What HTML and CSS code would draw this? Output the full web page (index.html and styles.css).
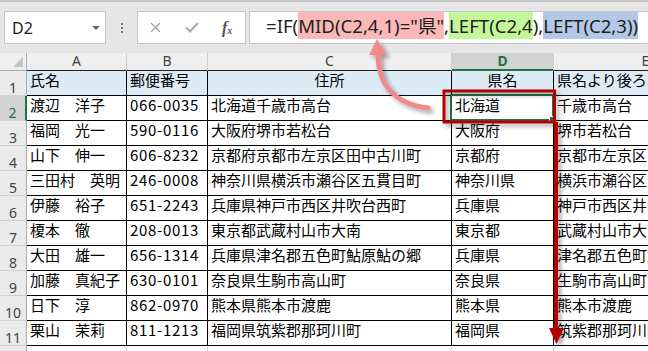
FILE: index.html
```html
<!DOCTYPE html>
<html lang="ja">
<head>
  <meta charset="UTF-8" />
  <title>県名の抽出</title>
  <link rel="stylesheet" href="styles.css">
</head>
<body>
  <div class="toolbar">
    <div class="namebox"><span>D2</span><i class="drop"></i></div>
    <div class="grip"><i></i><i></i><i></i></div>
    <div class="fxbtns">
      <span class="btn">
        <svg width="11" height="11" viewBox="0 0 11 11"><path d="M1 1L10 10M10 1L1 10" stroke="#a3a3a3" stroke-width="1.4" fill="none"/></svg>
      </span>
      <span class="btn">
        <svg width="14" height="11" viewBox="0 0 14 11"><path d="M1 5.5L5 9.5L13 1" stroke="#ababab" stroke-width="2" fill="none"/></svg>
      </span>
      <span class="btn fx">f<small>x</small></span>
    </div>
    <div class="formula">=IF(<span class="hl pink">MID(C2,4,1)="県"</span>,<span class="hl green">LEFT(C2,4</span>),<span class="hl blue">LEFT(C2,3))</span></div>
  </div>

  <div class="sheet">
    <div class="colhdr corner"><i class="tri"></i></div>
    <div class="colhdr">A</div>
    <div class="colhdr">B</div>
    <div class="colhdr">C</div>
    <div class="colhdr on">D</div>
    <div class="colhdr">E</div>

    <div class="rowhdr">1</div>
    <div class="cell head">氏名</div>
    <div class="cell head">郵便番号</div>
    <div class="cell head center">住所</div>
    <div class="cell head center">県名</div>
    <div class="cell head">県名より後ろ</div>

    <div class="rowhdr on">2</div>
    <div class="cell">渡辺　洋子</div>
    <div class="cell zip">066-0035</div>
    <div class="cell">北海道千歳市高台</div>
    <div class="cell active">北海道<div class="sel"><i class="handle"></i></div></div>
    <div class="cell">千歳市高台</div>

    <div class="rowhdr">3</div>
    <div class="cell">福岡　光一</div>
    <div class="cell zip">590-0116</div>
    <div class="cell">大阪府堺市若松台</div>
    <div class="cell">大阪府</div>
    <div class="cell">堺市若松台</div>

    <div class="rowhdr">4</div>
    <div class="cell">山下　伸一</div>
    <div class="cell zip">606-8232</div>
    <div class="cell">京都府京都市左京区田中古川町</div>
    <div class="cell">京都府</div>
    <div class="cell">京都市左京区田中古川町</div>

    <div class="rowhdr">5</div>
    <div class="cell">三田村　英明</div>
    <div class="cell zip">246-0008</div>
    <div class="cell">神奈川県横浜市瀬谷区五貫目町</div>
    <div class="cell">神奈川県</div>
    <div class="cell">横浜市瀬谷区五貫目町</div>

    <div class="rowhdr">6</div>
    <div class="cell">伊藤　裕子</div>
    <div class="cell zip">651-2243</div>
    <div class="cell">兵庫県神戸市西区井吹台西町</div>
    <div class="cell">兵庫県</div>
    <div class="cell">神戸市西区井吹台西町</div>

    <div class="rowhdr">7</div>
    <div class="cell">榎本　徹</div>
    <div class="cell zip">208-0013</div>
    <div class="cell">東京都武蔵村山市大南</div>
    <div class="cell">東京都</div>
    <div class="cell">武蔵村山市大南</div>

    <div class="rowhdr">8</div>
    <div class="cell">大田　雄一</div>
    <div class="cell zip">656-1314</div>
    <div class="cell">兵庫県津名郡五色町鮎原鮎の郷</div>
    <div class="cell">兵庫県</div>
    <div class="cell">津名郡五色町鮎原鮎の郷</div>

    <div class="rowhdr">9</div>
    <div class="cell">加藤　真紀子</div>
    <div class="cell zip">630-0101</div>
    <div class="cell">奈良県生駒市高山町</div>
    <div class="cell">奈良県</div>
    <div class="cell">生駒市高山町</div>

    <div class="rowhdr">10</div>
    <div class="cell">日下　淳</div>
    <div class="cell zip">862-0970</div>
    <div class="cell">熊本県熊本市渡鹿</div>
    <div class="cell">熊本県</div>
    <div class="cell">熊本市渡鹿</div>

    <div class="rowhdr">11</div>
    <div class="cell">栗山　茉莉</div>
    <div class="cell zip">811-1213</div>
    <div class="cell">福岡県筑紫郡那珂川町</div>
    <div class="cell">福岡県</div>
    <div class="cell">筑紫郡那珂川町</div>

    <div class="rowhdr">12</div>
    <div class="cell blank"></div>
    <div class="cell blank"></div>
    <div class="cell blank"></div>
    <div class="cell blank"></div>
    <div class="cell blank"></div>
  </div>

  <!-- annotation arrows drawn over the sheet -->
  <svg class="marks" width="648" height="351" viewBox="0 0 648 351">
    <defs>
      <filter id="shadow" x="-30%" y="-30%" width="160%" height="160%">
        <feDropShadow dx="3" dy="3" stdDeviation="2" flood-color="#000" flood-opacity="0.35"/>
      </filter>
    </defs>
    <g filter="url(#shadow)">
      <path d="M428 108C395 104 378 85 378 54" fill="none" stroke="#f08a8a" stroke-width="5" stroke-linecap="round"/>
      <polygon points="369,55 387,55 377,39" fill="#f08a8a"/>
    </g>
    <g filter="url(#shadow)">
      <rect x="444" y="91" width="110.5" height="31" fill="none" stroke="#b40000" stroke-width="3"/>
      <line x1="556" y1="122" x2="556" y2="330" stroke="#b40000" stroke-width="4"/>
      <polygon points="549,328 564,328 556.5,344" fill="#b40000"/>
    </g>
  </svg>
</body>
</html>
```

FILE: styles.css
```css
body {
  margin: 0;
  width: 648px;
  height: 351px;
  overflow: hidden;
  position: relative;
  background: #fff;
  font-family: "Noto Sans CJK JP", sans-serif;
}

/* --- formula bar --- */
.toolbar {
  display: flex;
  align-items: flex-start;
  height: 53px;
  box-sizing: border-box;
  padding: 9px 0 0 4px;
  border-top: 2px solid #c3c3c3;
  background: #e6e6e6;
  overflow: hidden;
}
.toolbar > div {
  flex: none;
}
.namebox {
  display: flex;
  align-items: center;
  width: 102px;
  height: 33px;
  box-sizing: border-box;
  padding-left: 7px;
  border: 1px solid #c6c6c6;
  background: #fff;
  font-family: "Noto Sans", sans-serif;
  font-size: 16px;
  color: #222;
}
.drop {
  margin-left: auto;
  margin-right: 5px;
  width: 0;
  height: 0;
  border-left: 4px solid transparent;
  border-right: 4px solid transparent;
  border-top: 4px solid #6a6a6a;
}
.grip {
  display: flex;
  flex-direction: column;
  align-items: center;
  justify-content: center;
  gap: 2px;
  width: 31px;
  height: 33px;
}
.grip i {
  width: 2px;
  height: 2px;
  background: #777;
}
.fxbtns {
  display: flex;
  width: 109px;
  height: 33px;
  box-sizing: border-box;
  border: 1px solid #c6c6c6;
  background: #fff;
}
.btn {
  flex: 1;
  display: flex;
  align-items: center;
  justify-content: center;
}
.fx {
  font-family: "Liberation Serif", serif;
  font-style: italic;
  font-weight: bold;
  font-size: 16px;
  color: #555;
}
.fx small {
  font-size: 10px;
  margin-top: 5px;
}
.formula {
  width: 420px;
  height: 33px;
  margin-left: 3px;
  box-sizing: border-box;
  padding-left: 16px;
  border: 1px solid #c6c6c6;
  background: #fff;
  font-family: "Noto Sans", "Noto Sans CJK JP", sans-serif;
  font-size: 18.6px;
  line-height: 27px;
  color: #1e1e1e;
  white-space: nowrap;
}
.hl {
  display: inline-block;
  line-height: 27px;
}
.pink { background: #fab8b8; }
.green { background: #c3f79a; }
.blue { background: #b3c8e6; }

/* --- worksheet --- */
.sheet {
  display: grid;
  grid-template-columns: 27px 100px 81px 244px 102px 184px;
  grid-template-rows: 18px repeat(12, 25px);
}
.sheet > div {
  box-sizing: border-box;
  white-space: nowrap;
}
.colhdr {
  background: #efefef;
  border-right: 1px solid #cfcfcf;
  border-bottom: 1px solid #222;
  font-family: "Noto Sans", sans-serif;
  font-size: 14px;
  line-height: 15px;
  text-align: center;
  color: #444;
}
.colhdr.corner {
  position: relative;
  border-bottom-color: #ababab;
  border-right-color: #ababab;
}
.tri {
  position: absolute;
  right: 3px;
  bottom: 3px;
  width: 0;
  height: 0;
  border-left: 10px solid transparent;
  border-bottom: 10px solid #c4c4c4;
}
.colhdr.on {
  background: #d2d2d2;
  color: #217346;
  font-weight: bold;
  border-bottom: 2px solid #217346;
}
.rowhdr {
  padding-top: 9px;
  background: #eaeaea;
  border-right: 1px solid #ababab;
  border-bottom: 1px solid #cfcfcf;
  font-family: "Noto Sans", sans-serif;
  font-size: 14px;
  line-height: 15px;
  text-align: center;
  color: #444;
}
.rowhdr.on {
  background: #d2d2d2;
  color: #217346;
  border-right: 2px solid #217346;
}
.cell {
  padding-left: 3px;
  border-right: 1px solid #000;
  border-bottom: 1px solid #000;
  font-size: 15px;
  line-height: 17px;
  color: #000;
}
.cell.head { background: #ddebf7; }
.cell.center {
  padding-left: 0;
  text-align: center;
}
.cell.zip { letter-spacing: 0.7px; }
.cell.blank {
  border-right-color: #d4d4d4;
  border-bottom-color: #d4d4d4;
}
.cell.active { position: relative; }
.sel {
  position: absolute;
  left: -2px;
  top: -2px;
  right: -1px;
  bottom: -1px;
  border: 2px solid #217346;
}
.handle {
  position: absolute;
  right: -3px;
  bottom: -3px;
  width: 5px;
  height: 5px;
  background: #217346;
  border-left: 1px solid #fff;
  border-top: 1px solid #fff;
}

/* --- annotations --- */
.marks {
  position: absolute;
  left: 0;
  top: 0;
  pointer-events: none;
}
```
